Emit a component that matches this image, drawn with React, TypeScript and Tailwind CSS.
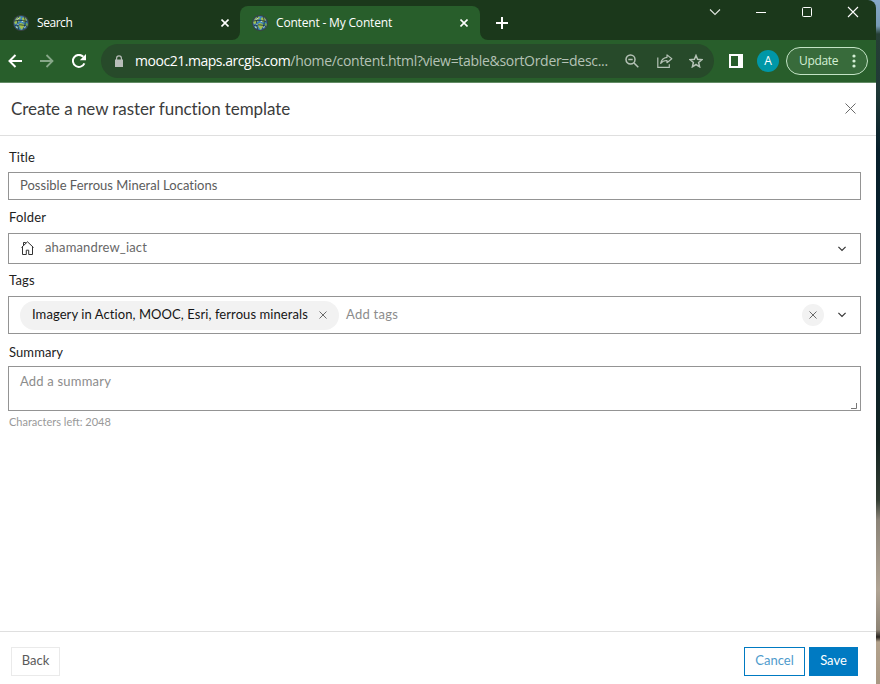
import React from "react";

const ui = "font-['Open_Sans','Noto_Sans',sans-serif]";

function Globe() {
  return (
    <svg width="16" height="16" viewBox="0 0 16 16" className="shrink-0">
      <circle cx="8" cy="8" r="8" fill="#3b4347" />
      <circle cx="8" cy="8" r="6.9" fill="#3c84b8" />
      <path d="M2 5.5 4 2.6 7 1.5l1 1.6-2 1.4.6 1.8-2.4.9L3 9.5 1.3 8zM9 3l2.5-.9 2.2 2.5L13 7l-2 .4L9.4 6zM7 8l3 .4 1.6 1.8-1.2 2.5-2 2L7 12.5 5.6 10z" fill="#a3bf4e" />
      <path d="M3 11.5l2 .3.8 2.2M13 8.5l1.6.5-1 2.8z" fill="#79a83f" stroke="#79a83f" strokeWidth=".6" />
      <path d="M1.5 6c4-1 9-1 13 1M1.8 10.5c4-1 8-1 12.2 1M6 1c-2 4-2 9 0 14M11 1.5c1.8 4 1.5 9-.6 13" stroke="#172d3c" strokeWidth=".8" fill="none" />
      <path d="M4 4.5l2-1.2M8.5 6.8l1.5-.6M4 9l1.5.5M3 12l1.6.4M11 12.5l1.6-1" stroke="#cde3ef" strokeWidth=".9" />
    </svg>
  );
}

function Cross({ size, className, w = 1 }: { size: number; className: string; w?: number }) {
  return (
    <svg width={size} height={size} viewBox={`0 0 ${size} ${size}`} className={`shrink-0 ${className}`} fill="none" stroke="currentColor" strokeWidth={w}>
      <path d={`M.5.5 ${size - 0.5} ${size - 0.5}M${size - 0.5}.5.5 ${size - 0.5}`} />
    </svg>
  );
}

function Caret() {
  return (
    <svg width="8" height="6" viewBox="0 0 8 6" className="mr-[14px] shrink-0" fill="none" stroke="#333" strokeWidth="1.2">
      <path d="M.4.8 4 4.4 7.6.8" />
    </svg>
  );
}

function TabStrip() {
  return (
    <div className={`flex h-10 items-stretch rounded-tr-[8px] bg-[#1b381b] text-white ${ui}`}>
      <div className="flex w-[240px] items-center rounded-br-[8px] pl-[13px] pt-[6px]">
        <Globe />
        <span className="ml-2 text-[12px] leading-4 tracking-[-0.45px]">Search</span>
        <Cross size={8} w={1.6} className="ml-auto mr-[11px]" />
      </div>
      <div className="relative mt-[6px] flex h-[34px] w-[240px] items-center rounded-t-[8px] bg-[#285e2b] pl-3">
        <svg width="8" height="8" className="absolute bottom-0 -left-2" fill="#285e2b"><path d="M8 0v8H0A8 8 0 0 0 8 0z" /></svg>
        <svg width="8" height="8" className="absolute bottom-0 -right-2" fill="#285e2b"><path d="M0 0v8h8A8 8 0 0 1 0 0z" /></svg>
        <Globe />
        <span className="ml-2 text-[12px] leading-4 tracking-[-0.18px]">Content - My Content</span>
        <Cross size={8} w={1.6} className="ml-auto mr-3" />
      </div>
      <div className="flex items-center pl-4 pt-[6px]">
        <svg width="12" height="12" stroke="white" strokeWidth="2"><path d="M6 0v12M0 6h12" /></svg>
      </div>
      <div className="ml-auto flex items-start pt-[6px]">
        <svg width="12" height="12" className="mr-[34px]" fill="none" stroke="#e0e6e0" strokeWidth="1.1"><path d="m1 3.5 5 5 5-5" /></svg>
        <svg width="12" height="12" className="mr-[34px]" stroke="white"><path d="M1 6.5h10" /></svg>
        <svg width="12" height="12" className="mr-[34px]" fill="none" stroke="white"><rect x="1.5" y="1.5" width="9" height="9" rx="1" /></svg>
        <svg width="12" height="12" className="mr-[17px]" stroke="white" strokeWidth="1.1"><path d="m1 1 10 10M11 1 1 11" /></svg>
      </div>
    </div>
  );
}

function Toolbar() {
  return (
    <div className={`flex h-[43px] items-center border-b border-[#638b65] bg-[#285e2b] ${ui}`}>
      <svg width="14" height="14" className="ml-2" fill="none" stroke="white" strokeWidth="2"><path d="M14 7H1.5M7.5 1 1.5 7l6 6" /></svg>
      <svg width="14" height="14" className="ml-[18px]" fill="none" stroke="#87a889" strokeWidth="1.8"><path d="M0 7h12.5M6.5 1l6 6-6 6" /></svg>
      <svg width="14" height="14" className="ml-[18px]" fill="none" stroke="white" strokeWidth="2"><path d="M12.4 9.3A6 6 0 1 1 11.3 2.8" /><path d="M14 0v6.2H7.8z" fill="white" stroke="none" /></svg>
      <div className="ml-[15px] flex h-[34px] w-[613px] items-center rounded-full bg-[#274a2a] pl-[14px] text-[#b5c2b6]">
        <svg width="8" height="12" fill="#b8bdb9"><path d="M0 4.5h1V3.2a3 3 0 0 1 6 0v1.3h1V12H0zM2.2 4.5h3.6V3.2a1.8 1.8 0 0 0-3.6 0z" /></svg>
        <div className="ml-3 w-[480px] whitespace-nowrap text-[14px] leading-5 tracking-[-0.3px]"><span className="tracking-[-0.47px] text-white">mooc21.maps.arcgis.com</span>/home/content.html?view=table&amp;sortOrder=desc...</div>
        <svg width="14" height="14" className="ml-[10px] shrink-0" fill="none" stroke="currentColor" strokeWidth="1.5"><circle cx="5.5" cy="5.5" r="4.5" /><path d="m9 9 4.3 4.3M3.3 5.5h4.4" /></svg>
        <svg width="16" height="14" className="ml-[18px] shrink-0" fill="none" stroke="currentColor" strokeWidth="1.2"><path d="M.8 3.5v9.8h11.5v-3" /><path d="M10 .9 14.8 4.8 10 8.7V6.5C7.2 6.4 5.2 7.3 3.7 9.4 4.2 6.1 6.2 3.7 10 3.3z" strokeLinejoin="round" /></svg>
        <svg width="14" height="14" className="ml-4 shrink-0" fill="none" stroke="currentColor" strokeWidth="1.5"><path d="m7 1.5 1.6 3.8 4.3.4-3.3 2.8 1 4.3L7 10.5l-3.6 2.3 1-4.3-3.3-2.8 4.3-.4z" /></svg>
      </div>
      <svg width="14" height="14" className="ml-[15px] shrink-0"><path fillRule="evenodd" fill="white" d="M0 0h14v14H0zM2 2v10h7V2z" /></svg>
      <div className="ml-[14px] flex size-[22px] shrink-0 items-center justify-center rounded-full bg-[#0097a7] text-[12px] font-medium text-white">A</div>
      <div className="ml-[7px] flex h-7 w-[82px] shrink-0 items-center rounded-full border border-[#c3e3c5] bg-[#386b3b] pl-3 text-[#d4efd5]">
        <span className="text-[12px] leading-4 tracking-[-0.35px]">Update</span>
        <svg width="4" height="14" className="ml-auto mr-[11px]" fill="currentColor"><circle cx="2" cy="2" r="1.6" /><circle cx="2" cy="7" r="1.6" /><circle cx="2" cy="12" r="1.6" /></svg>
      </div>
    </div>
  );
}

function Label({ children, className }: { children: string; className: string }) {
  return <div className={`h-4 pl-px text-[13px] leading-4 text-[#222] ${className}`}>{children}</div>;
}

const field = "flex border border-[#949494] bg-white text-[13px]";

export default function App() {
  return (
    <div className="flex h-[684px] w-[880px] overflow-hidden bg-[linear-gradient(to_bottom,#86a9c9_0,#789bb6_26px,#263f35_34px,#203a37_90px,#071f2b_150px,#08232e_340px,#122320_440px,#343e34_500px,#8b8478_520px,#b0a494_590px,#8d8375_630px,#29251f_637px,#b3a28c_642px,#a99884_684px)]">
      <div className="flex w-[876px] shrink-0 flex-col">
        <TabStrip />
        <Toolbar />
        <div className="flex grow flex-col bg-white font-['Lato','Open_Sans',sans-serif]">
          <header className="flex h-[53px] items-center justify-between border-b border-[#dfdfdf] pl-[11px] pr-5">
            <h1 className="mb-px text-[17px] leading-6 tracking-[-0.08px] text-[#3c3c3c]">Create a new raster function template</h1>
            <Cross size={11} className="mb-[2px] text-[#6a6a6a]" />
          </header>
          <main className="flex grow flex-col pl-2 pr-[15px]">
            <Label className="mt-[13px] tracking-[0.1px]">Title</Label>
            <div className={`${field} mt-[7px] h-7 items-center pl-[11px] tracking-[0.01px] text-[#5c5c5c]`}>Possible Ferrous Mineral Locations</div>
            <Label className="mt-[9px] tracking-[0.2px]">Folder</Label>
            <div className={`${field} mt-[8px] h-[31px] items-center pl-3 text-[#686868]`}>
              <svg width="13" height="14" fill="none" stroke="#333" className="mb-px shrink-0"><path d="M.5 6.5 6.5.8l6 5.7M1.5 5.5v8h3.8V9.2h2.4v4.3h3.8v-8M2.5 4.5v-3h2v1" /></svg>
              <span className="mb-px ml-[11px] grow tracking-[0.15px]">ahamandrew_iact</span>
              <Caret />
            </div>
            <Label className="mt-[8px] tracking-[0.2px]">Tags</Label>
            <div className={`${field} mt-[8px] h-[38px] items-center pl-[11px]`}>
              <div className="flex h-[29px] w-[319px] items-center rounded-full bg-[#f2f2f2] pl-3 text-[#151515]">
                <span className="whitespace-nowrap tracking-[0.08px]">Imagery in Action, MOOC, Esri, ferrous minerals</span>
                <Cross size={8} className="ml-auto mr-3 text-[#6a6a6a]" />
              </div>
              <span className="ml-[7px] grow tracking-[0.25px] text-[#8c8c8c]">Add tags</span>
              <div className="mr-[14px] flex size-[22px] items-center justify-center rounded-full bg-[#f2f2f2]"><Cross size={8} className="text-[#6a6a6a]" /></div>
              <Caret />
            </div>
            <Label className="mt-[10px] tracking-[0.1px]">Summary</Label>
            <div className={`${field} mt-[6px] h-[45px] justify-between pl-[11px] pt-[6px] leading-4 text-[#8c8c8c]`}>
              <span className="tracking-[0.2px]">Add a summary</span>
              <svg width="6" height="6" className="mb-px mr-[3px] self-end" fill="none" stroke="#777"><path d="M0 5.5h5.5V0" /></svg>
            </div>
            <div className="mt-[3px] pl-px text-[11px] leading-4 text-[#999]">Characters left: 2048</div>
          </main>
          <footer className="flex h-[53px] items-start border-t border-[#dfdfdf] pl-[11px] pr-[18px] pt-[15px] text-[13px]">
            <button className="h-[29px] w-[49px] border border-[#eaeaea] pb-px text-[#5a5a5a]">Back</button>
            <button className="ml-auto h-[29px] w-[61px] border border-[#007ac2] pb-px text-[#4f9bcc]">Cancel</button>
            <button className="ml-1 h-[29px] w-[49px] bg-[#007ac2] pb-px text-white">Save</button>
          </footer>
        </div>
      </div>
    </div>
  );
}
